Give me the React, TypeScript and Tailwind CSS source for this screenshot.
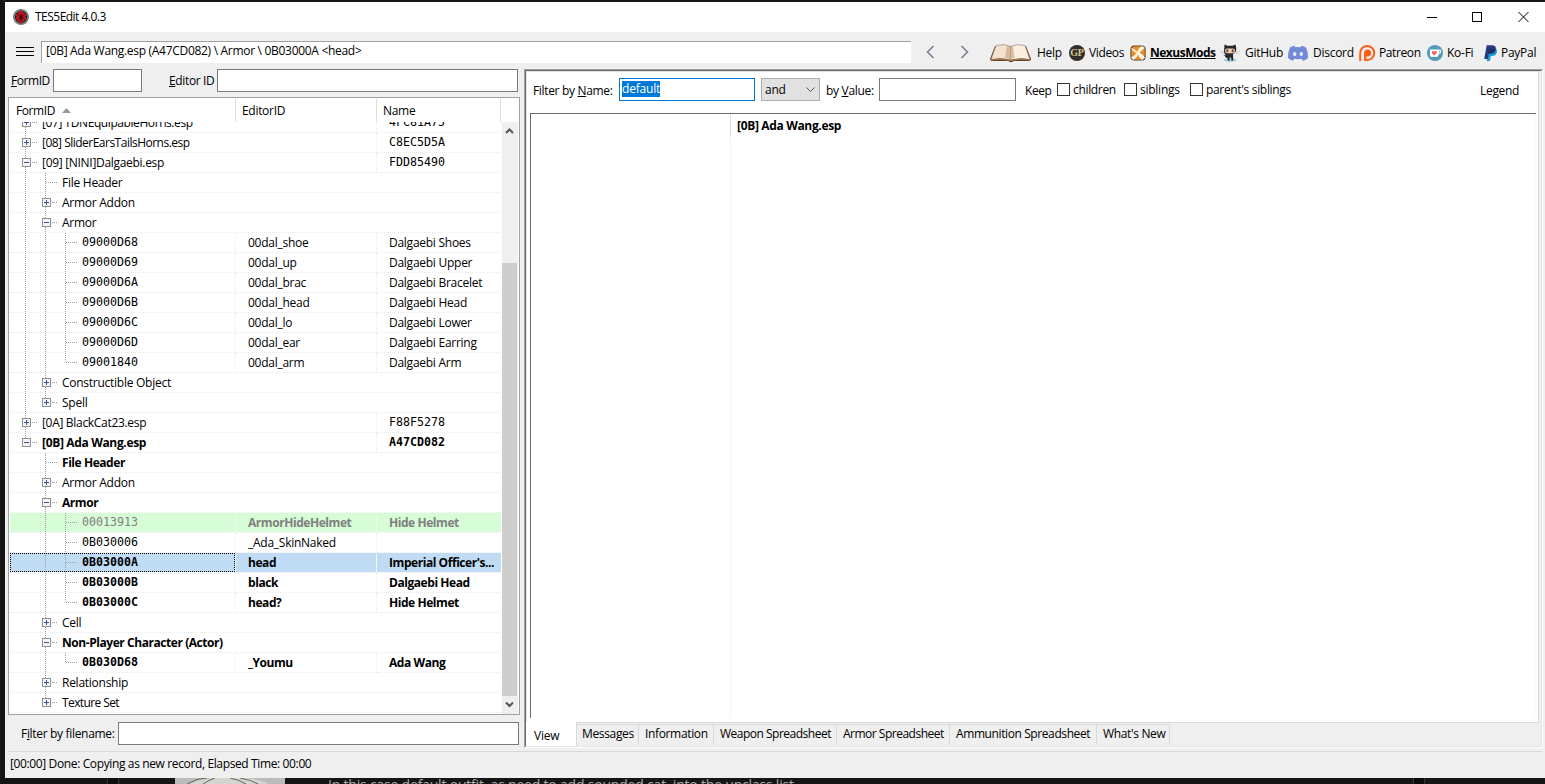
import React from 'react';

type Row = {
  label: string;
  lines: string; // one character per level: "|" through, "T" branch, "L" last branch, "." nothing
  button?: '+' | '-';
  mono?: boolean;
  editor?: string;
  name?: string;
  monoName?: boolean;
  cells?: boolean;
  bold?: boolean;
  tone?: 'new' | 'selected';
  fit?: string;
};

const item = (label: string, lines: string, editor: string, name: string, extra: Partial<Row> = {}): Row => ({
  label, lines, editor, name, mono: true, cells: true, ...extra,
});
const file = (label: string, lines: string, button: '+' | '-', name: string, extra: Partial<Row> = {}): Row => ({
  label, lines, button, name, monoName: true, ...extra,
});

const rows: Row[] = [
  file('[07] TDNEquipableHorns.esp', 'T', '+', '4FC81A75', { fit: 'tracking-[-0.42px]' }),
  file('[08] SliderEarsTailsHorns.esp', 'T', '+', 'C8EC5D5A', { fit: 'tracking-[-0.51px]' }),
  file('[09] [NINI]Dalgaebi.esp', 'T', '-', 'FDD85490', { fit: 'tracking-[-0.3px]' }),
  { label: 'File Header', lines: '|T' },
  { label: 'Armor Addon', lines: '|T', button: '+' },
  { label: 'Armor', lines: '|T', button: '-' },
  item('09000D68', '||T', '00dal_shoe', 'Dalgaebi Shoes'),
  item('09000D69', '||T', '00dal_up', 'Dalgaebi Upper'),
  item('09000D6A', '||T', '00dal_brac', 'Dalgaebi Bracelet'),
  item('09000D6B', '||T', '00dal_head', 'Dalgaebi Head'),
  item('09000D6C', '||T', '00dal_lo', 'Dalgaebi Lower'),
  item('09000D6D', '||T', '00dal_ear', 'Dalgaebi Earring'),
  item('09001840', '||L', '00dal_arm', 'Dalgaebi Arm'),
  { label: 'Constructible Object', lines: '|T', button: '+' },
  { label: 'Spell', lines: '|L', button: '+' },
  file('[0A] BlackCat23.esp', 'T', '+', 'F88F5278', { fit: 'tracking-[-0.31px]' }),
  file('[0B] Ada Wang.esp', 'L', '-', 'A47CD082', { bold: true, fit: 'tracking-[-0.34px]' }),
  { label: 'File Header', lines: '.T', bold: true },
  { label: 'Armor Addon', lines: '.T', button: '+' },
  { label: 'Armor', lines: '.T', button: '-', bold: true },
  item('00013913', '.|T', 'ArmorHideHelmet', 'Hide Helmet', { bold: true, tone: 'new' }),
  item('0B030006', '.|T', '_Ada_SkinNaked', ''),
  item('0B03000A', '.|T', 'head', "Imperial Officer's...", { bold: true, tone: 'selected' }),
  item('0B03000B', '.|T', 'black', 'Dalgaebi Head', { bold: true }),
  item('0B03000C', '.|L', 'head?', 'Hide Helmet', { bold: true }),
  { label: 'Cell', lines: '.T', button: '+' },
  { label: 'Non-Player Character (Actor)', lines: '.T', button: '-', bold: true },
  item('0B030D68', '.|L', '_Youmu', 'Ada Wang', { bold: true }),
  { label: 'Relationship', lines: '.T', button: '+' },
  { label: 'Texture Set', lines: '.L', button: '+', fit: 'tracking-[-0.6px]' },
];

const MONO = "font-['DejaVu_Sans_Mono',monospace] text-[11.63px] tracking-normal";

function TreeGlyph({ lines, button }: { lines: string; button?: '+' | '-' }) {
  const depth = lines.length - 1;
  const x = 16 + depth * 20;
  return (
    <svg width={33 + depth * 20} height="20" className="-ml-px shrink-0" shapeRendering="crispEdges" fill="none">
      {lines.split('').map((c, i) =>
        c === '.' ? null : (
          <path key={i} d={`M${16.5 + i * 20} 0V${c === 'L' ? 10 : 20}`} stroke="#a0a0a0" strokeDasharray="1 1" />
        ),
      )}
      <path d={`M${x + 1} 9.5H${x + 13}`} stroke="#a0a0a0" strokeDasharray="1 1" />
      {button && (
        <g>
          <rect x={x - 3} y="5" width="9" height="9" fill="#f4f4f4" />
          <rect x={x - 2.5} y="5.5" width="8" height="8" stroke="#919191" />
          <path d={`M${x - 1} 9.5H${x + 4}`} stroke="#3b5298" />
          {button === '+' && <path d={`M${x + 1.5} 7V12`} stroke="#3b5298" />}
        </g>
      )}
    </svg>
  );
}

function TreeRow({ row }: { row: Row }) {
  const tone = row.tone === 'new' ? 'bg-[#d7fdd7]' : row.tone === 'selected' ? 'bg-[#bfdcf4]' : '';
  const color = row.tone === 'new' ? 'text-[#808080]' : 'text-black';
  const weight = row.bold ? 'font-bold tracking-[-0.44px]' : '';
  const line = 'border-b border-dotted border-[#ebebeb] bg-clip-padding';
  const mono = `${MONO} leading-[18px] ${row.bold && row.tone !== 'new' ? 'font-bold' : 'font-normal'}`;
  return (
    <div className={`flex h-5 w-[492px] shrink-0 pl-px leading-5 whitespace-pre ${color} ${weight}`}>
      <div className={`h-5 ${row.cells ? 'w-[226px]' : row.monoName ? 'w-[367px]' : 'w-[491px]'} ${row.cells || row.monoName ? 'border-r border-dotted border-r-[#ebebeb]' : ''} ${line} ${tone}`}>
        <div className={`flex h-[19px] ${row.tone === 'selected' ? 'outline-1 -outline-offset-1 outline-dotted outline-black' : ''}`}>
          <TreeGlyph lines={row.lines} button={row.button} />
          <span className={row.mono ? mono : row.fit ?? ''}>{row.label}</span>
        </div>
      </div>
      {row.cells && <div className={`w-[141px] border-r pl-3 ${line} ${tone}`}>{row.editor}</div>}
      {(row.cells || row.monoName) && (
        <div className={`w-[124px] pl-3 ${line} ${tone}`}>
          {row.monoName ? <span className={`block ${mono}`}>{row.name}</span> : row.name}
        </div>
      )}
    </div>
  );
}

const BookIcon = () => (
  <svg width="43" height="18" viewBox="0 0 43 18">
    <path d="M6 2L1 15l1 2h17l2 1h2l2-1h16l1-2-5-13z" fill="#60402b" />
    <path d="M7 1.500Q15-.8 21.500 2.500V16Q12 13.500 2 15.500z" fill="#f2e2cf" stroke="#8d7059" strokeWidth=".6" />
    <path d="M36 1.500Q28-.8 21.500 2.500V16Q31 13.500 41 15.500z" fill="#faeee0" stroke="#8d7059" strokeWidth=".6" />
    <path d="M21.500 3V16Q19 14 16 14L18 2zM21.500 3V16q2-2 4-2L24 2z" fill="#c8a584" opacity=".65" />
    <path d="M2 16q10-2 19.500.5Q31 14 41 16" stroke="#a97b55" fill="none" />
  </svg>
);

const GamerPoetsIcon = () => (
  <svg width="16" height="16" viewBox="0 0 16 16">
    <circle cx="8" cy="8" r="8" fill="#332d2a" />
    <text x="8" y="11.300" textAnchor="middle" fontSize="10" letterSpacing="-0.3" fontWeight="bold" fontFamily="Liberation Serif" fill="#d5c795">GP</text>
  </svg>
);

const NexusIcon = () => (
  <svg width="16" height="16" viewBox="0 0 16 16">
    <rect x="1" y="1" width="14" height="14" rx="3" fill="#e9912d" stroke="#4b4037" strokeWidth="1.200" />
    <path d="M1 3Q5 4 7 7Q8 3 12 1l3 2Q11 5 9.500 8Q13 9 15 13l-3 2Q9 13 8 9.500Q7 13 3 15L1 12Q5 11 6.500 8Q3 7 1 3z" fill="#fff4e0" />
    <path d="M5 1.500h5L8 5zM14.500 5v6L11 8zM5 14.500h6L8 11zM1.500 5v5L5 8z" fill="#ee8d1e" />
  </svg>
);

const OctocatIcon = () => (
  <svg width="20" height="18" viewBox="0 0 20 18">
    <ellipse cx="10" cy="16" rx="6.500" ry="1.700" fill="#a5cfdf" />
    <path d="M4.500 0.500l3 1.300h5L15.500.5l.7 3.500q.6 4.500-3.200 6l.3 6.500h-1.800l-.5-3h-1.200l-.3 3.300-1.800-.2-.1-2.300-1.900-.7-1.200-2-1.300-.7 2 .2 1.400 1q-3.500-2.600-2.300-8.100z" fill="#25292b" />
    <rect x="5" y="4.500" width="10" height="4.800" rx="2.300" fill="#f3cdb5" />
    <ellipse cx="7.300" cy="6.800" rx="1.100" ry="1.500" fill="#6b4539" />
    <ellipse cx="12.700" cy="6.800" rx="1.100" ry="1.500" fill="#6b4539" />
    <path d="M0 7.500l3.500.3M1 9.500l3-.7M20 7.500l-3.500.3M19 9.500l-3-.7" stroke="#aaa" strokeWidth=".5" />
  </svg>
);

const DiscordIcon = () => (
  <svg width="20" height="16" viewBox="0 0 20 16">
    <path d="M6.500.8Q3.500 1.200 2 2.500-.2 7 .1 13q2 2.200 5 2.800l1.200-2q3.700.9 7.400 0l1.200 2q3-.6 5-2.800.3-6-1.900-10.500Q16.500 1.200 13.500.8l-.7 1.400q-2.800-.4-5.600 0z" fill="#7289da" />
    <ellipse cx="6.700" cy="9" rx="1.700" ry="1.900" fill="#efefef" />
    <ellipse cx="13.300" cy="9" rx="1.700" ry="1.900" fill="#efefef" />
  </svg>
);

const PatreonIcon = () => (
  <svg width="17" height="16" viewBox="0 0 17 16" fill="none">
    <path d="M1.200 16V8a7 7 0 1 1 7.200 7q-1.300 0-2.200-.4" stroke="#fb611a" strokeWidth="2" />
    <path d="M5 16V8a3.600 3.600 0 1 1 3.600 3.600q-.8 0-1.300-.2V16z" fill="#fb611a" />
  </svg>
);

const KofiIcon = () => (
  <svg width="16" height="16" viewBox="0 0 16 16">
    <circle cx="8" cy="8" r="8" fill="#549bb9" />
    <path d="M3 4.500h9q2.500 0 2.300 2T11.800 9q-.5 3-2.500 3H5Q3 12 3 10z" fill="#fff" />
    <path d="M12 6q1.200 0 1.100.7T12 7.500z" fill="#549bb9" />
    <path d="M7.300 10.500L4.800 8Q4.300 6 6 5.900q.9 0 1.300.8.4-.8 1.300-.8Q10.300 6 9.800 8z" fill="#f05b5c" />
  </svg>
);

const PaypalIcon = () => (
  <svg width="14" height="16" viewBox="0 0 14 16">
    <path d="M5 3.500h7q1.600 1.500.7 4.300Q11.700 11 8 11H6.800L6 16H2.700z" fill="#179bd7" />
    <path d="M2.700.2H8q4.300.1 3.800 3.800Q11 8.500 6.800 8.500H4.700l-1 5.500H.2z" fill="#253b80" />
    <path d="M5 4h6.700Q11 8.500 6.800 8.500H4.700L3.700 14z" fill="#222d65" />
  </svg>
);

const links: { label: string; icon: React.ReactNode; box: string; text: string }[] = [
  { label: 'Help', icon: <BookIcon />, box: 'ml-5 w-12', text: 'w-[25px]' },
  { label: 'Videos', icon: <GamerPoetsIcon />, box: 'ml-[7px] w-5', text: 'w-[35px] tracking-[-0.35px]' },
  { label: 'NexusMods', icon: <NexusIcon />, box: 'ml-[6px] w-5', text: 'w-[65px] font-bold tracking-[-0.5px] underline' },
  { label: 'GitHub', icon: <OctocatIcon />, box: 'ml-[5px] w-[25px]', text: 'w-[38px]' },
  { label: 'Discord', icon: <DiscordIcon />, box: 'ml-[5px] w-[25px]', text: 'w-[40px]' },
  { label: 'Patreon', icon: <PatreonIcon />, box: 'ml-[6px] w-5', text: 'w-[41px] tracking-[-0.4px]' },
  { label: 'Ko-Fi', icon: <KofiIcon />, box: 'ml-[7px] w-5', text: 'w-[28px]' },
  { label: 'PayPal', icon: <PaypalIcon />, box: 'ml-[9px] w-[17px]', text: 'w-[36px]' },
];

function TitleBar() {
  return (
    <div className="flex h-[30px] items-center bg-white pl-2">
      <svg width="16" height="16" viewBox="0 0 16 16">
        <circle cx="8" cy="8" r="7" fill="#171717" stroke="#718080" strokeWidth="2" />
        <path d="M8 0l1.200 3L11 2.500l.5 2.500 2 .5-1 2.500 1 2-2 1-1 2.500-1.500-.5L8 16l-1.200-3-1.800.5-.5-2.500-2-1 1-2-1-2.500 2-.5L5 2.500l1.800.5z" fill="#bb1424" />
        <path d="M8 5v7M5.500 6.500l5 3M5.500 10l5-3.500" stroke="#2a0709" strokeWidth="1" />
      </svg>
      <span className="ml-[6px] tracking-[-0.52px]">TES5Edit 4.0.3</span>
      <svg width="103" height="12" className="mr-[15px] ml-auto" fill="none" stroke="#000" shapeRendering="crispEdges">
        <path d="M0 6.500H10M45.500 1.500h9v9h-9z" />
        <path d="M91.500 1l10 10M101.500 1l-10 10" shapeRendering="auto" />
      </svg>
    </div>
  );
}

function Toolbar() {
  return (
    <div className="flex h-[37px] items-center pb-px pl-[11px] whitespace-nowrap">
      <svg width="18" height="10" className="mt-1" stroke="#000" shapeRendering="crispEdges">
        <path d="M0 .5H18M0 4.500H18M0 8.500H18" />
      </svg>
      <div className="mt-[9px] ml-[7px] h-[22px] w-[870px] self-start border-t border-l border-[#a0a0a0] bg-white pl-1 leading-[17px] tracking-[-0.3px]">
        [0B] Ada Wang.esp (A47CD082) \ Armor \ 0B03000A &lt;head&gt;
      </div>
      <svg width="43" height="14" className="mt-1 ml-[15px]" stroke="#7a7a90" strokeWidth="1.500" fill="none">
        <path d="M7.500 1L1.500 7l6 6M35.500 1l6 6-6 6" />
      </svg>
      {links.map((l) => (
        <div key={l.label} className="mt-[5px] flex h-5 items-center">
          <span className={`flex shrink-0 ${l.box}`}>{l.icon}</span>
          <span className={l.text}>{l.label}</span>
        </div>
      ))}
    </div>
  );
}

function ScrollBar() {
  return (
    <div className="flex w-4 flex-col bg-[#efefef]">
      <svg width="15" height="17" fill="none" stroke="#555" strokeWidth="2"><path d="M4 11l3.500-3.500L11 11" /></svg>
      <div className="mt-[124px] h-[433px] w-[15px] bg-[#cdcdcd]" />
      <svg width="15" height="17" fill="none" stroke="#555" strokeWidth="2"><path d="M4 6.500L7.500 10 11 6.500" /></svg>
    </div>
  );
}

function LeftPane() {
  return (
    <div className="flex w-[519px] shrink-0 flex-col whitespace-nowrap">
      <div className="flex h-7 items-start pl-[6px] leading-[23px]">
        <span className="w-[42px] tracking-[-0.45px]"><u>F</u>ormID</span>
        <div className="h-[23px] w-[89px] border border-[#7a7a7a] bg-white" />
        <span className="ml-[27px] w-[48px] tracking-[-0.35px]"><u>E</u>ditor ID</span>
        <div className="h-[23px] w-[301px] border border-[#7a7a7a] bg-white" />
      </div>
      <div className="ml-[3px] flex h-[618px] w-[512px] flex-col border border-[#a0a0a7] bg-white">
        <div className="flex h-6 shrink-0 items-end leading-[23px]">
          <div className="flex h-[23px] w-[227px] items-center border-r border-[#dedede] pl-[7px] tracking-[-0.4px]">
            FormID
            <svg width="9" height="5" className="ml-[7px]"><path d="M4.500 0L9 5H0z" fill="#999" /></svg>
          </div>
          <div className="h-[23px] w-[141px] border-r border-[#dedede] pl-[6px] tracking-[-0.3px]">EditorID</div>
          <div className="h-[23px] w-[124px] border-r border-[#dedede] pl-[6px] tracking-[-0.3px]">Name</div>
        </div>
        <div className="flex h-[592px] overflow-hidden">
          <div className="mt-[-9px] flex w-[493px] flex-col">
            {rows.map((r, i) => <TreeRow key={i} row={r} />)}
          </div>
          <ScrollBar />
        </div>
      </div>
      <div className="mt-[7px] flex h-[23px] pl-4 leading-[23px]">
        <span className="w-[97px] shrink-0 tracking-[-0.32px]">F<u>i</u>lter by filename:</span>
        <div className="h-[23px] w-[401px] border border-[#7a7a7a] bg-white" />
      </div>
    </div>
  );
}

const Check = ({ label, box }: { label: string; box: string }) => (
  <label className={`flex items-center ${box}`}>
    <span className="mr-[3px] size-[13px] shrink-0 border border-[#333] bg-white" />
    {label}
  </label>
);

const tabs = [
  ['Messages', 'w-[62px] pl-[5px] tracking-[-0.35px]'],
  ['Information', 'w-[75px] pl-[6px] tracking-[-0.35px]'],
  ['Weapon Spreadsheet', 'w-[123px] pl-[6px] tracking-[-0.5px]'],
  ['Armor Spreadsheet', 'w-[113px] pl-[6px] tracking-[-0.5px]'],
  ['Ammunition Spreadsheet', 'w-[147px] pl-[6px] tracking-[-0.4px]'],
  ["What's New", 'w-[73px] pl-[6px] tracking-[-0.35px]'],
];

function RightPane() {
  return (
    <div className="flex h-[679px] w-[1019px] flex-col border-t border-r border-b border-l border-t-[#a0a0a0] border-r-white border-b-white border-l-[#a0a0a0]">
      <div className="flex h-[677px] flex-col border border-t-[#696969] border-r-[#e3e3e3] border-b-[#e3e3e3] border-l-[#696969]">
        <div className="flex h-[652px] w-[1013px] flex-col border border-t-[#e3e3e3] border-r-[#d9d9d9] border-b-[#d9d9d9] border-l-[#e3e3e3] bg-white">
          <div className="flex h-[41px] items-start pt-[6px] pl-[6px] whitespace-nowrap">
            <span className="mt-[3px] w-[86px] leading-[19px] tracking-[-0.33px]">Filter by <u>N</u>ame:</span>
            <div className="flex h-[23px] w-[136px] items-start border border-[#0078d7] pt-[2px] pl-[2px]">
              <span className="w-[38px] bg-[#0078d7] leading-4 tracking-[-0.2px] text-white">default</span>
            </div>
            <div className="ml-[6px] flex h-[23px] w-[59px] items-center border border-[#adadad] bg-[#e1e1e1] pl-[3px]">
              and
              <svg width="9" height="6" className="mr-[4px] ml-auto" fill="none" stroke="#555"><path d="M.5.5l4 4 4-4" /></svg>
            </div>
            <span className="mt-[3px] ml-[6px] w-[53px] leading-[19px] tracking-[-0.3px]">by <u>V</u>alue:</span>
            <div className="h-[23px] w-[137px] border border-[#7a7a7a]" />
            <span className="mt-[3px] ml-[9px] w-8 leading-[19px] tracking-[-0.4px]">Keep</span>
            <div className="flex h-[23px] items-center">
              <Check label="children" box="w-[67px] tracking-[-0.33px]" />
              <Check label="siblings" box="w-[66px] tracking-[-0.25px]" />
              <Check label="parent's siblings" box="w-[120px] tracking-[-0.33px]" />
            </div>
            <span className="mt-[3px] mr-[18px] ml-auto w-10 leading-[19px] tracking-[-0.3px]">Legend</span>
          </div>
          <div className="ml-[3px] flex h-[605px] w-[1006px] border-t border-l border-[#696969]">
            <div className="flex w-[200px] flex-col">
              <div className="h-[23px] border-r border-[#dedede]" />
              <div className="flex-1 border-r border-dotted border-[#ebebeb]" />
            </div>
            <div className="w-[804px] border-r border-dotted border-[#ebebeb] pl-[6px] leading-6 font-bold tracking-[-0.34px]">[0B] Ada Wang.esp</div>
          </div>
        </div>
        <div className="flex h-[23px] whitespace-nowrap">
          <div className="-mt-px h-6 w-[51px] border-r border-[#d9d9d9] bg-white pl-2 leading-[27px]">View</div>
          <div className="mt-px flex h-[21px] border-t border-[#d9d9d9] leading-[18px]">
            {tabs.map(([t, c]) => <div key={t} className={`border-r border-[#d9d9d9] ${c}`}>{t}</div>)}
          </div>
        </div>
      </div>
    </div>
  );
}

export default function App() {
  return (
    <div className="flex h-[784px] w-[1545px] flex-col overflow-hidden bg-[#151515] pt-0.5 font-['Open_Sans','Noto_Sans',sans-serif] text-[12px] leading-4 tracking-[-0.26px] text-black">
      <div className="ml-[5px] flex h-[776px] shrink-0 flex-col bg-[#efefef]">
        <TitleBar />
        <Toolbar />
        <div className="flex h-[682px]">
          <LeftPane />
          <RightPane />
        </div>
        <div className="ml-[3px] flex h-[27px] w-[1535px] items-center border-t border-[#d9d9d9] pb-[3px] pl-0.5 tracking-[-0.37px]">
          [00:00] Done: Copying as new record, Elapsed Time: 00:00
        </div>
      </div>
      <div className="flex h-[6px] shrink-0 overflow-hidden">
        <div className="ml-[107px] w-3 border-x border-[#333] bg-[#0c0c0c]" />
        <svg width="110" height="6" className="ml-[56px] shrink-0">
          <path d="M0 0h110v6H0z" fill="#b9bcba" />
          <path d="M15 6Q25 0 38 0h35q15 2 20 6z" fill="#d5d3cf" />
          <path d="M12 6Q22 0 32 0M28 6q6-4 12-6M65 0q12 2 18 6M55 0q10 2 16 6" stroke="#646561" fill="none" />
        </svg>
        <span className="-mt-px ml-[43px] w-[1085px] text-[14px] leading-4 tracking-[-0.2px] whitespace-nowrap text-[#aaa]">In this case default outfit, as need to add sounded cat. into the unclass list</span>
        <div className="w-3 shrink-0 border-x border-[#333] bg-[#0c0c0c]" />
      </div>
    </div>
  );
}
